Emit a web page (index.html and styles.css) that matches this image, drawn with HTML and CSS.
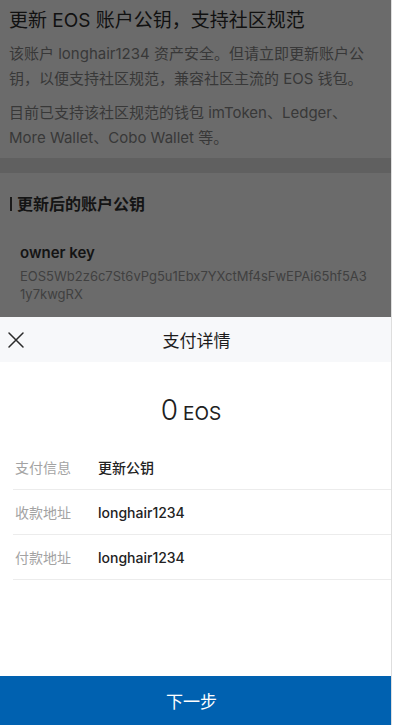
FILE: index.html
```html
<!DOCTYPE html>
<html lang="zh">
<head>
<meta charset="utf-8">
<title>支付详情</title>
<link rel="stylesheet" href="styles.css">
</head>
<body>
<div class="app">
  <div class="page">
    <div class="intro">
      <h1 class="title">更新 EOS 账户公钥，支持社区规范</h1>
      <p class="text">该账户 longhair1234 资产安全。但请立即更新账户公钥，以便支持社区规范，兼容社区主流的 EOS 钱包。</p>
      <p class="text text-gap">目前已支持该社区规范的钱包 imToken、Ledger、More Wallet、Cobo Wallet 等。</p>
    </div>
    <div class="band"></div>
    <div class="section">
      <h2 class="section-title"><span class="bar"></span>更新后的账户公钥</h2>
      <div class="key">
        <div class="key-label">owner key</div>
        <div class="key-value">EOS5Wb2z6c7St6vPg5u1Ebx7YXctMf4sFwEPAi65hf5A31y7kwgRX</div>
      </div>
    </div>
  </div>
  <div class="sheet">
    <div class="sheet-head">
      <svg class="close" width="18" height="18" viewBox="0 0 18 18"><path d="M2 2 L16 16 M16 2 L2 16" stroke="#2b2b2b" stroke-width="1.5" fill="none" stroke-linecap="round"/></svg>
      <div class="sheet-title">支付详情</div>
    </div>
    <div class="amount"><span class="num">0</span><span class="unit">EOS</span></div>
    <div class="rows">
      <div class="row"><span class="label">支付信息</span><span class="value">更新公钥</span></div>
      <div class="row"><span class="label">收款地址</span><span class="value">longhair1234</span></div>
      <div class="row"><span class="label">付款地址</span><span class="value">longhair1234</span></div>
    </div>
    <div class="spacer"></div>
    <div class="btn">下一步</div>
  </div>
</div>
</body>
</html>
```

FILE: styles.css
```css
* { box-sizing: border-box; margin: 0; padding: 0; }
html, body { background: #fff; }
body {
  font-family: Inter, "Noto Sans CJK SC", sans-serif;
  width: 400px;
  height: 725px;
  overflow: hidden;
}
.app {
  width: 392px;
  height: 725px;
  display: flex;
  flex-direction: column;
  border-right: 1px solid #dedede;
}
.page {
  height: 317px;
  background: #6b6b6b;
  overflow: hidden;
  display: flex;
  flex-direction: column;
}
.intro {
  padding: 8px 20px 8px 9px;
}
.title {
  font-size: 19px;
  line-height: 26px;
  font-weight: 400;
  color: #111;
}
.text {
  margin-top: 7px;
  font-size: 15px;
  line-height: 25px;
  color: #383838;
}
.text-gap { margin-top: 9px; }
.band {
  height: 15px;
  background: #606060;
}
.section {
  padding: 19px 20px 0 10px;
}
.section-title {
  display: flex;
  align-items: center;
  font-size: 16px;
  line-height: 24px;
  font-weight: 700;
  color: #141414;
}
.bar {
  width: 2px;
  height: 14px;
  background: #1a1a1a;
  margin-right: 5px;
}
.key {
  padding: 27px 0 0 10px;
}
.key-label {
  font-size: 15px;
  line-height: 20px;
  font-weight: 600;
  color: #141414;
}
.key-value {
  margin-top: 4px;
  font-size: 13px;
  line-height: 18px;
  color: #404040;
  word-break: break-all;
  padding-right: 2px;
}
.sheet {
  flex: 1;
  background: #fff;
  display: flex;
  flex-direction: column;
}
.sheet-head {
  height: 45px;
  background: #f7f8fa;
  display: flex;
  align-items: center;
  justify-content: center;
  position: relative;
}
.close {
  position: absolute;
  left: 7px;
  top: 14px;
}
.sheet-title {
  font-size: 17px;
  color: #1c1c1c;
  font-weight: 400;
  margin-left: 2px;
}
.amount {
  display: flex;
  justify-content: center;
  align-items: baseline;
  padding-top: 28px;
  padding-right: 9px;
  height: 83px;
  color: #202020;
}
.num {
  font-size: 28px;
  line-height: 40px;
  font-weight: 300;
}
.unit {
  font-size: 19px;
  margin-left: 5px;
}
.rows {
  padding-left: 13px;
}
.row {
  height: 45px;
  display: flex;
  align-items: center;
  border-bottom: 1px solid #ececec;
  font-size: 14px;
}
.label {
  width: 85px;
  padding-left: 2px;
  color: #a3a3a3;
}
.value {
  color: #222;
  font-weight: 500;
}
.spacer { flex: 1; }
.btn {
  height: 49px;
  background: #0061b0;
  color: #fff;
  font-size: 17px;
  display: flex;
  align-items: center;
  justify-content: center;
  padding-right: 8px;
}
```
